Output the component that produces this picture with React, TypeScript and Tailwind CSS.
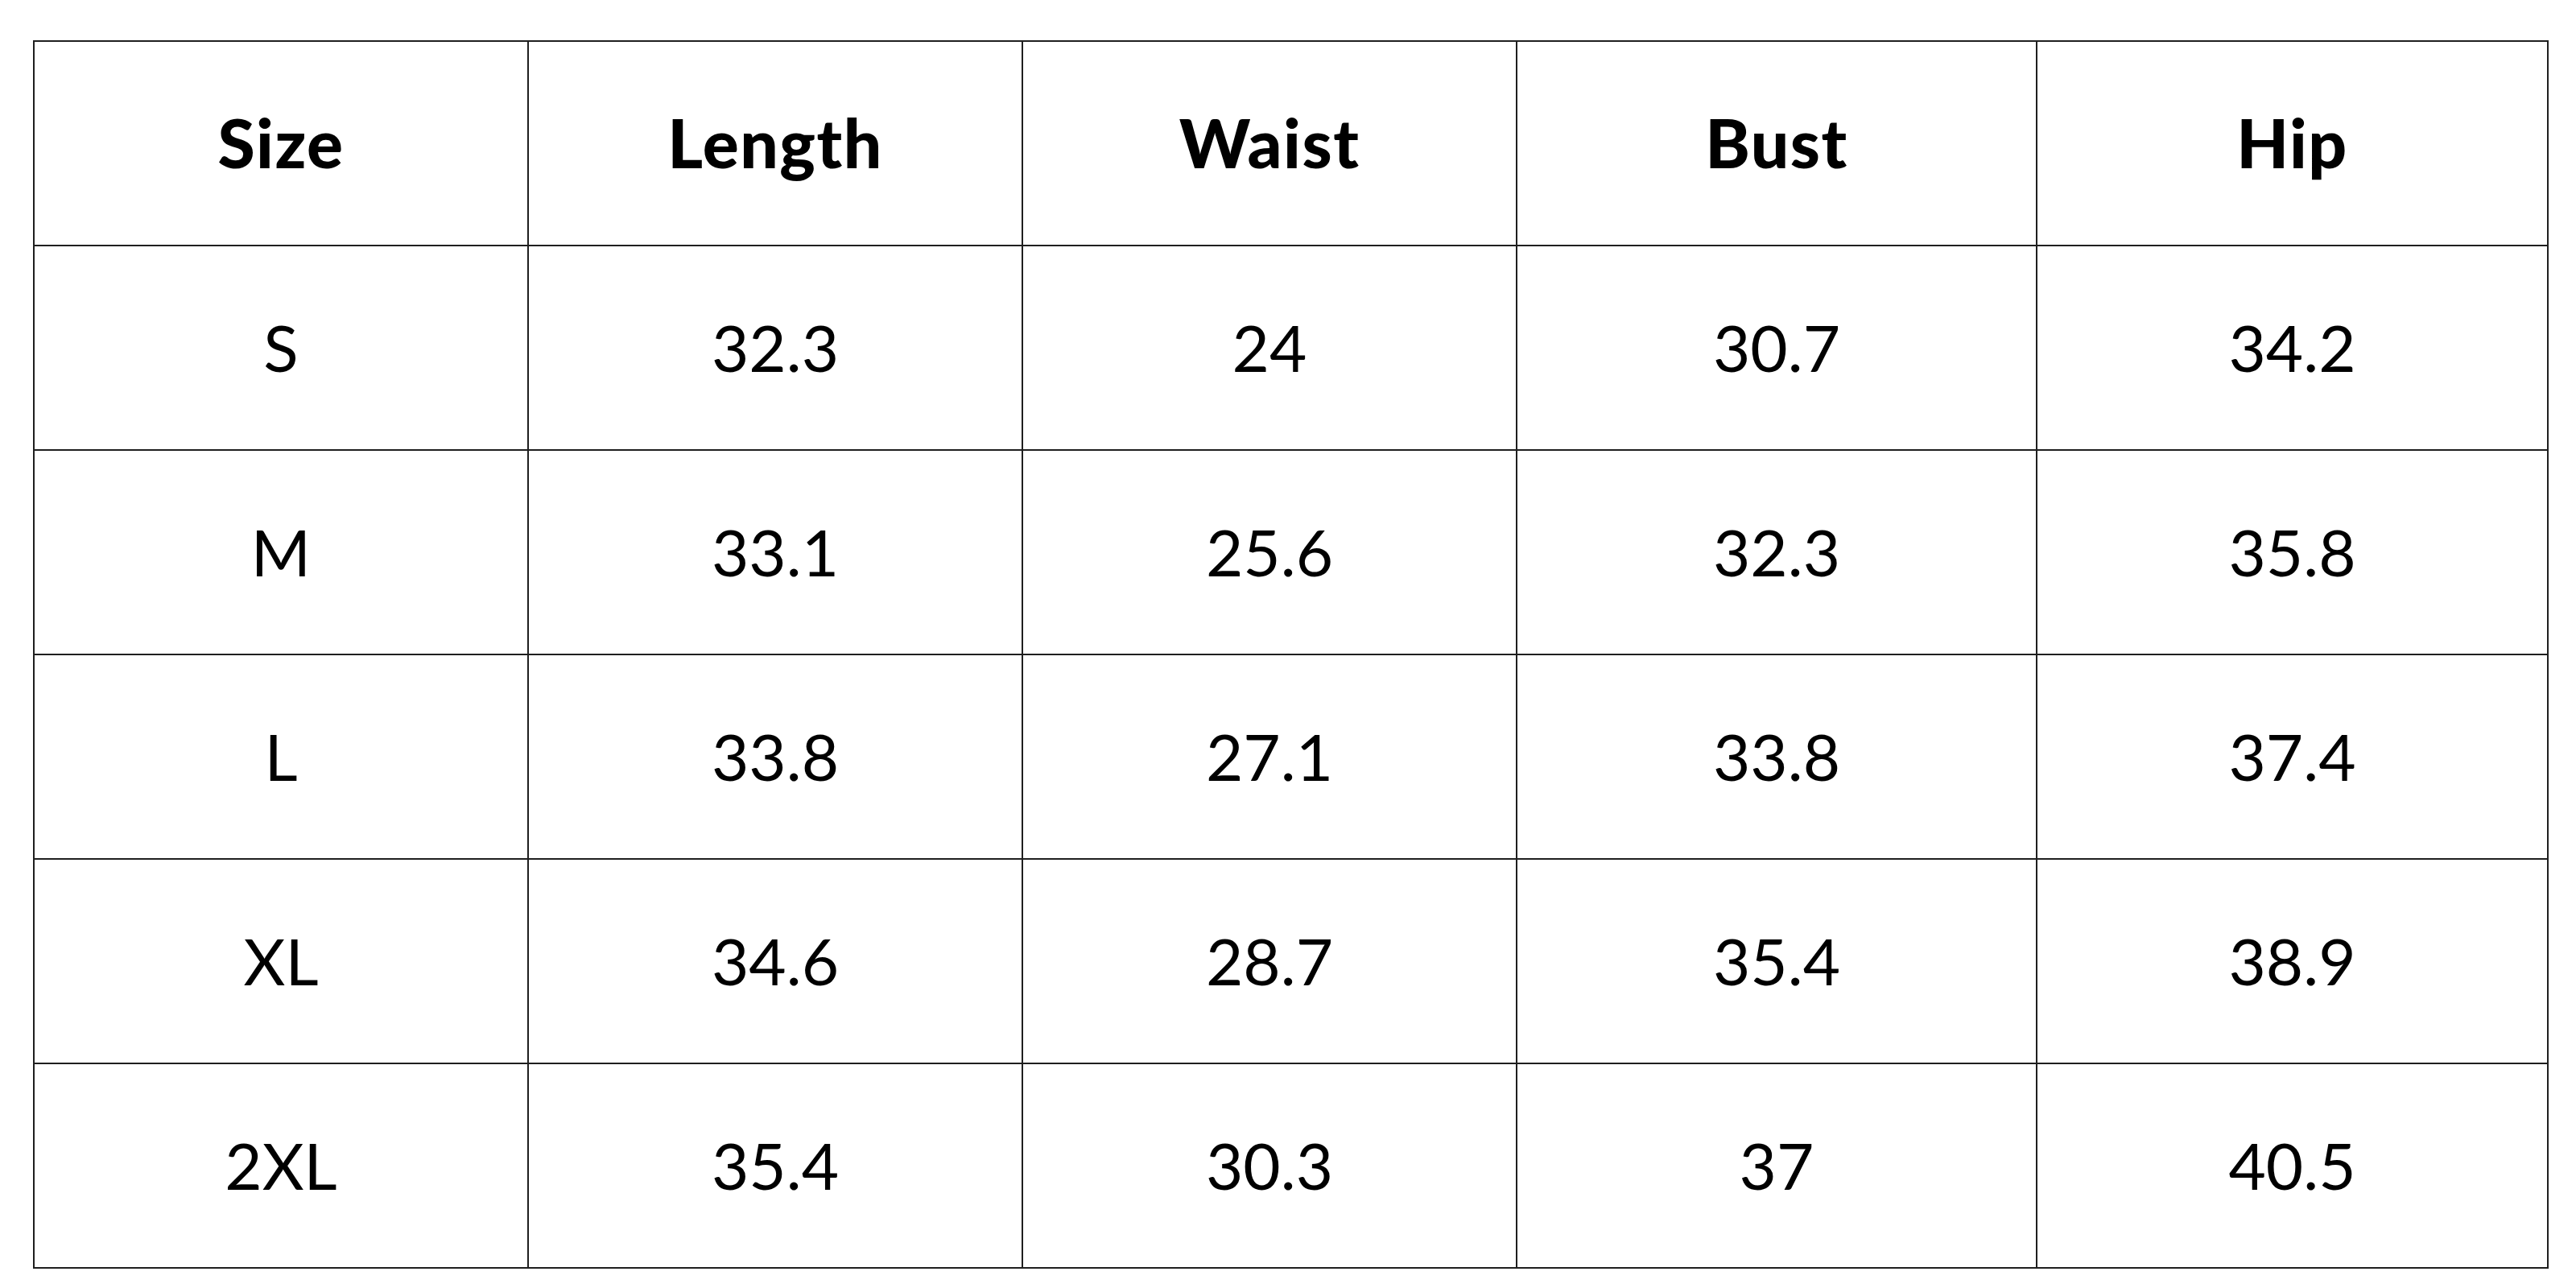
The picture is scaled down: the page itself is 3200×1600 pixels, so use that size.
const HEADERS = ["Size", "Length", "Waist", "Bust", "Hip"]

const ROWS = [
  ["S", "32.3", "24", "30.7", "34.2"],
  ["M", "33.1", "25.6", "32.3", "35.8"],
  ["L", "33.8", "27.1", "33.8", "37.4"],
  ["XL", "34.6", "28.7", "35.4", "38.9"],
  ["2XL", "35.4", "30.3", "37", "40.5"],
]

export default function App() {
  return (
    <div className="min-h-screen w-full bg-white pt-[50px] pl-[41px] font-['Lato',sans-serif] text-black">
      <table className="w-[3123px] table-fixed border-collapse border-2 border-[#1f1f1f]">
        <colgroup>
          <col className="w-[614px]" />
          <col className="w-[614px]" />
          <col className="w-[614px]" />
          <col className="w-[646px]" />
          <col className="w-[635px]" />
        </colgroup>
        <thead>
          <tr className="h-[254px]">
            {HEADERS.map((h) => (
              <th
                key={h}
                className="border-2 border-[#1f1f1f] pb-[2px] text-center align-middle text-[84px] font-black tracking-[1.5px]"
              >
                {h}
              </th>
            ))}
          </tr>
        </thead>
        <tbody>
          {ROWS.map((r) => (
            <tr key={r[0]} className="h-[254px]">
              {r.map((v, i) => (
                <td
                  key={i}
                  className="border-2 border-[#1f1f1f] pb-[2px] text-center align-middle text-[80px] font-normal"
                >
                  {v}
                </td>
              ))}
            </tr>
          ))}
        </tbody>
      </table>
    </div>
  )
}
